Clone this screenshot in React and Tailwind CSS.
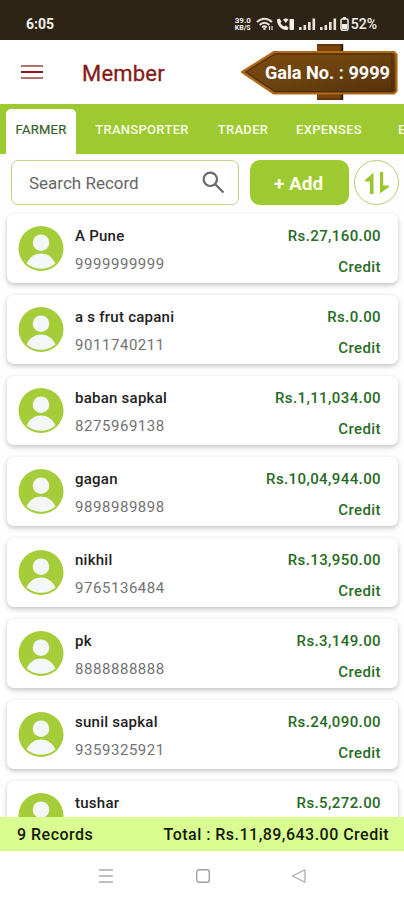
import React, { useState } from 'react';

const members = [
  { name: 'A Pune', phone: '9999999999', amount: 'Rs.27,160.00' },
  { name: 'a s frut capani', phone: '9011740211', amount: 'Rs.0.00' },
  { name: 'baban sapkal', phone: '8275969138', amount: 'Rs.1,11,034.00' },
  { name: 'gagan', phone: '9898989898', amount: 'Rs.10,04,944.00' },
  { name: 'nikhil', phone: '9765136484', amount: 'Rs.13,950.00' },
  { name: 'pk', phone: '8888888888', amount: 'Rs.3,149.00' },
  { name: 'sunil sapkal', phone: '9359325921', amount: 'Rs.24,090.00' },
  { name: 'tushar', phone: '', amount: 'Rs.5,272.00' }
];

const tabs = [
  { label: 'FARMER', width: 'w-[70px]' },
  { label: 'TRANSPORTER', width: 'w-[132px]' },
  { label: 'TRADER', width: 'w-[70px]' },
  { label: 'EXPENSES', width: 'w-[102px]' },
  { label: 'E', width: 'w-[60px]' }
];

const SignalIcon = () => (
  <svg className="h-[12px] w-[18px]" viewBox="0 0 18 12" fill="#e8e3dc">
    <rect x="1" y="9" width="2.6" height="3" />
    <rect x="5.5" y="7" width="2.6" height="5" />
    <rect x="10" y="4" width="2.6" height="8" />
    <rect x="14.5" y="0.5" width="2.6" height="11.5" />
  </svg>
);

const StatusBar = () => (
  <div className="flex h-10 shrink-0 items-center justify-between bg-[#2e2416] pt-2 pr-[27px] pl-[26px] text-[#f3f0ea]">
    <span className="text-[14px] font-bold leading-none">6:05</span>
    <div className="flex items-center">
      <div className="mr-1 flex w-[18px] flex-col items-center text-[8px] font-bold leading-[8px]">
        <span>39.0</span>
        <span className="text-[7px] leading-[7px]">KB/S</span>
      </div>
      {/* Wifi */}
      <svg className="mr-[2px] h-[14px] w-[18px]" viewBox="0 0 18 14" fill="none" stroke="#e8e3dc" strokeWidth="2">
        <path d="M1 5C5.500 0.500 11.500 0.500 16 5" />
        <path d="M3.700 8C6.700 5 10.300 5 13.300 8" />
        <path d="M6.300 10.500C7.800 9 9.200 9 10.700 10.500" />
        <path d="M8.500 11V13" />
        <path d="M13.500 9V13M16 9V13" strokeWidth="1.200" />
      </svg>
      {/* Call over wifi */}
      <svg className="mr-[3px] h-[13px] w-[19px]" viewBox="0 0 19 13" fill="#f3f0ea">
        <path d="M1 1.500L3.500 0.500L5.500 3.500L4.500 5C5.500 7 6.800 8 8.200 8.500L9.800 7.500L12.500 9.500L11.500 12C6 12.500 1 8 1 1.500Z" />
        <path d="M7 1.500C9 0 11 0 12.500 1.500L9.800 5Z" />
        <rect x="13.500" y="1" width="4.500" height="11" rx="1" />
      </svg>
      <SignalIcon />
      <span className="w-[3px]" />
      <SignalIcon />
      <svg className="mr-[2px] ml-[3px] h-[14px] w-[9px]" viewBox="0 0 9 14">
        <rect x="1" y="2" width="7" height="11.200" rx="1.500" fill="none" stroke="#f3f0ea" strokeWidth="1.500" />
        <rect x="3" y="0" width="3" height="2" fill="#f3f0ea" />
        <rect x="2" y="7" width="5" height="5" fill="#f3f0ea" />
      </svg>
      <span className="text-[14px] font-medium leading-none">52%</span>
    </div>
  </div>
);

const GalaSign = () => (
  <svg className="h-[58px] w-[160px]" viewBox="0 0 160 58">
    <defs>
      <linearGradient id="wood" x1="0" y1="0" x2="1" y2="1">
        <stop offset="0" stopColor="#81490e" />
        <stop offset="0.5" stopColor="#6b430f" />
        <stop offset="1" stopColor="#54300b" />
      </linearGradient>
    </defs>
    <rect x="78" y="1" width="26" height="56" fill="#7b450d" />
    <path d="M78 2H104M78 56H104" stroke="#5c3309" strokeWidth="1.500" />
    <path d="M103 1V57" stroke="#3b2107" strokeWidth="2.500" />
    <path d="M3 29L35 9H155L157.500 11.500V48L155 50.500H35Z" fill="url(#wood)" stroke="#b26a1a" strokeWidth="2.200" strokeLinejoin="round" />
    <path d="M7 29L36 11H153V48.500H36Z" fill="none" stroke="#4b2b09" strokeWidth="1" />
    <text x="26" y="36" textLength="125" lengthAdjust="spacingAndGlyphs" fill="#ffffff" fontSize="18" fontWeight="700">
      Gala No. : 9999
    </text>
  </svg>
);

const Header = () => (
  <header className="flex h-16 shrink-0 items-center justify-between bg-white pl-[21px]">
    <div className="flex items-center">
      <button aria-label="Open menu" className="flex w-[22px] flex-col gap-1">
        <span className="h-[2px] bg-[#a97972]" />
        <span className="h-[2px] bg-[#8d1712]" />
        <span className="h-[2px] bg-[#a97972]" />
      </button>
      <h1 className="ml-[39px] pt-[3px] text-[22px] leading-none tracking-[0.2px] text-[#851b17] [-webkit-text-stroke:0.3px_#851b17]">
        Member
      </h1>
    </div>
    <div className="mr-[5px]">
      <GalaSign />
    </div>
  </header>
);

const TabBar = ({ active, onSelect }) => (
  <nav className="flex h-[50px] shrink-0 items-end overflow-hidden bg-[#9dc931] pl-[6px]">
    {tabs.map((tab) => (
      <button
        key={tab.label}
        onClick={() => onSelect(tab.label)}
        className={`h-[45px] shrink-0 pb-1 text-[13px] leading-none ${tab.width} ${
          active === tab.label
            ? 'rounded-t-[5px] bg-white text-[#35602b] tracking-[0.25px] [-webkit-text-stroke:0.2px_#35602b]'
            : 'font-medium tracking-[0.3px] text-[#fbffe9]'
        } ${tab.label === 'E' ? 'ml-[18px] text-left' : ''}`}
      >
        {tab.label}
      </button>
    ))}
  </nav>
);

const Toolbar = () => (
  <div className="flex h-[56px] shrink-0 items-start pt-[6px] pl-[11px]">
    <div className="flex h-[45px] w-[228px] items-center justify-between rounded-[7px] border-[1.5px] border-[#c0d48a] bg-white pr-[13px] pl-[17px]">
      <span className="pt-[2px] text-[17px] text-[#666666]">Search Record</span>
      <svg className="h-[23px] w-[23px]" viewBox="0 0 23 23" fill="none" stroke="#68686a" strokeWidth="2.200">
        <circle cx="8.300" cy="8.300" r="6.700" />
        <path d="M13.200 13.200L21.500 21.500" />
      </svg>
    </div>
    <button className="ml-[11px] h-[45px] w-[99px] rounded-[10px] bg-[#9dc931] pt-[3px] pr-[2px] text-[19px] font-bold text-[#fcffe9]">
      + Add
    </button>
    <button
      aria-label="Sort"
      className="ml-[5px] flex h-[45px] w-[45px] items-center justify-center rounded-full border border-[#b8cb79] bg-white"
    >
      <svg className="h-[24px] w-[26px]" viewBox="0 0 26 24" fill="#99c82e">
        <path d="M9.500 1.500V23H6V10.500H1V9Z" />
        <path d="M16 22.500V1H19.200V14.500H25V16Z" />
      </svg>
    </button>
  </div>
);

const Avatar = () => (
  <svg className="h-[46px] w-[46px] shrink-0" viewBox="0 0 46 46">
    <circle cx="23" cy="22.500" r="22.500" fill="#a5cd39" />
    <circle cx="23" cy="16.700" r="8.300" fill="#f4f7f8" />
    <path d="M8.500 37.500C12 30.500 17 27.500 23 27.500C29 27.500 34 30.500 37.500 37.500C29 44.500 17 44.500 8.500 37.500Z" fill="#f4f7f8" />
  </svg>
);

const MemberCard = ({ member }) => (
  <li className="flex h-[69px] shrink-0 rounded-[7px] bg-white pt-3 pr-[17px] pl-[11px] shadow-[0_2px_5px_rgba(0,0,0,0.24)]">
    <Avatar />
    <div className="ml-[11px] flex-1">
      <p className="text-[15px] font-medium leading-[20px] tracking-[0.25px] text-[#222222]">{member.name}</p>
      <p className="mt-2 text-[15px] leading-[20px] tracking-[0.55px] text-[#727272]">{member.phone}</p>
    </div>
    <div className="text-right text-[15px] font-medium text-[#276b25]">
      <p className="leading-[20px] tracking-[0.4px]">{member.amount}</p>
      <p className="mt-[11px] leading-[20px] tracking-[0.4px]">Credit</p>
    </div>
  </li>
);

const SystemNav = () => (
  <div className="flex h-[49px] shrink-0 items-center justify-between bg-white pr-[97px] pl-[98px]">
    <svg className="h-4 w-4" viewBox="0 0 16 16" stroke="#aaaaaa" strokeWidth="1.300">
      <path d="M1 2H15M1 8H15M1 14H15" />
    </svg>
    <svg className="h-4 w-4" viewBox="0 0 16 16" fill="none" stroke="#a2a2a2" strokeWidth="1.400">
      <rect x="1.700" y="1.700" width="12.600" height="12.600" rx="2.500" />
    </svg>
    <svg className="h-4 w-4" viewBox="0 0 16 16" fill="none" stroke="#a8a8a8" strokeWidth="1.200" strokeLinejoin="round">
      <path d="M1.500 8L14 1.800V14.200Z" />
    </svg>
  </div>
);

const App = () => {
  const [activeTab, setActiveTab] = useState('FARMER');

  return (
    <div className="flex h-[900px] w-[404px] flex-col overflow-hidden bg-[#fefefe] font-['Roboto',sans-serif]">
      <StatusBar />
      <Header />
      <TabBar active={activeTab} onSelect={setActiveTab} />
      <Toolbar />

      {/* Member list */}
      <ul className="flex min-h-0 flex-1 flex-col gap-3 overflow-hidden pt-1 pr-[6px] pl-[7px]">
        {members.map((member) => (
          <MemberCard key={member.name} member={member} />
        ))}
      </ul>

      {/* Totals */}
      <div className="flex h-[34px] shrink-0 items-center justify-between bg-[#d9fd91] pt-[2px] pr-[15px] pl-[17px] text-[16px] font-medium tracking-[0.48px] text-[#141a0a]">
        <span>9 Records</span>
        <span>Total : Rs.11,89,643.00 Credit</span>
      </div>
      <SystemNav />
    </div>
  );
};

export default App;
